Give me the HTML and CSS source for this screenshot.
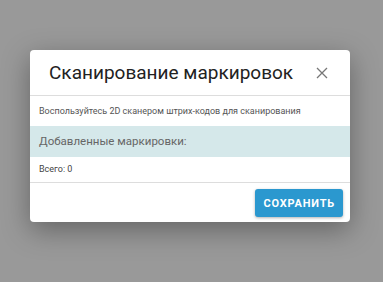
FILE: index.html
```html
<!DOCTYPE html>
<html lang="ru">
<head>
    <meta charset="UTF-8">
    <meta name="viewport" content="width=device-width, initial-scale=1.0">
    <title>Сканирование маркировок</title>
    <link rel="stylesheet" href="styles.css">
</head>
<body>
    <div class="modal">
        <div class="modal-header">
            <h2>Сканирование маркировок</h2>
            <button class="close" aria-label="Закрыть">
                <svg width="12" height="12" viewBox="0 0 12 12">
                    <path d="M1 1 L11 11 M11 1 L1 11" stroke="#777" stroke-width="1.3" fill="none"/>
                </svg>
            </button>
        </div>
        <div class="hint">Воспользуйтесь 2D сканером штрих-кодов для сканирования</div>
        <div class="added">Добавленные маркировки:</div>
        <div class="total">Всего: 0</div>
        <div class="modal-footer">
            <button class="save">Сохранить</button>
        </div>
    </div>
</body>
</html>
```

FILE: styles.css
```css
body {
    margin: 0;
    height: 282px;
    background: #999;
    font-family: Roboto, "Noto Sans", sans-serif;
    padding-top: 50px;
    box-sizing: border-box;
}
.modal {
    width: 320px;
    margin: 0 auto 0 30px;
    background: #fff;
    border-radius: 4px;
    box-shadow: 0 8px 28px rgba(0, 0, 0, 0.35);
    overflow: hidden;
}
.modal-header {
    display: flex;
    align-items: center;
    height: 45px;
    padding: 0 22px 0 19px;
    border-bottom: 1px solid #ddd;
}
.modal-header h2 {
    flex: 1;
    margin: 0;
    font-size: 19px;
    font-weight: 400;
    color: #222;
}
.close {
    border: 0;
    background: none;
    padding: 0;
    width: 12px;
    height: 12px;
    display: flex;
}
.hint {
    height: 30px;
    line-height: 30px;
    padding: 0 9px;
    font-size: 9px;
    color: #555;
}
.added {
    height: 31px;
    line-height: 31px;
    padding: 0 9px;
    background: #d5e8ea;
    font-size: 11.5px;
    color: #666;
}
.total {
    height: 25px;
    line-height: 25px;
    padding: 0 9px;
    font-size: 9px;
    color: #444;
    border-bottom: 1px solid #ddd;
}
.modal-footer {
    display: flex;
    justify-content: flex-end;
    padding: 6px 7px 5px;
}
.save {
    height: 28px;
    padding: 0 8px;
    border: 0;
    border-radius: 3px;
    background: #2b98cf;
    color: #fff;
    font-family: Roboto, sans-serif;
    font-weight: 700;
    font-size: 11px;
    letter-spacing: 0.8px;
    text-transform: uppercase;
    box-shadow: 0 1px 3px rgba(0, 0, 0, 0.3);
}
```
